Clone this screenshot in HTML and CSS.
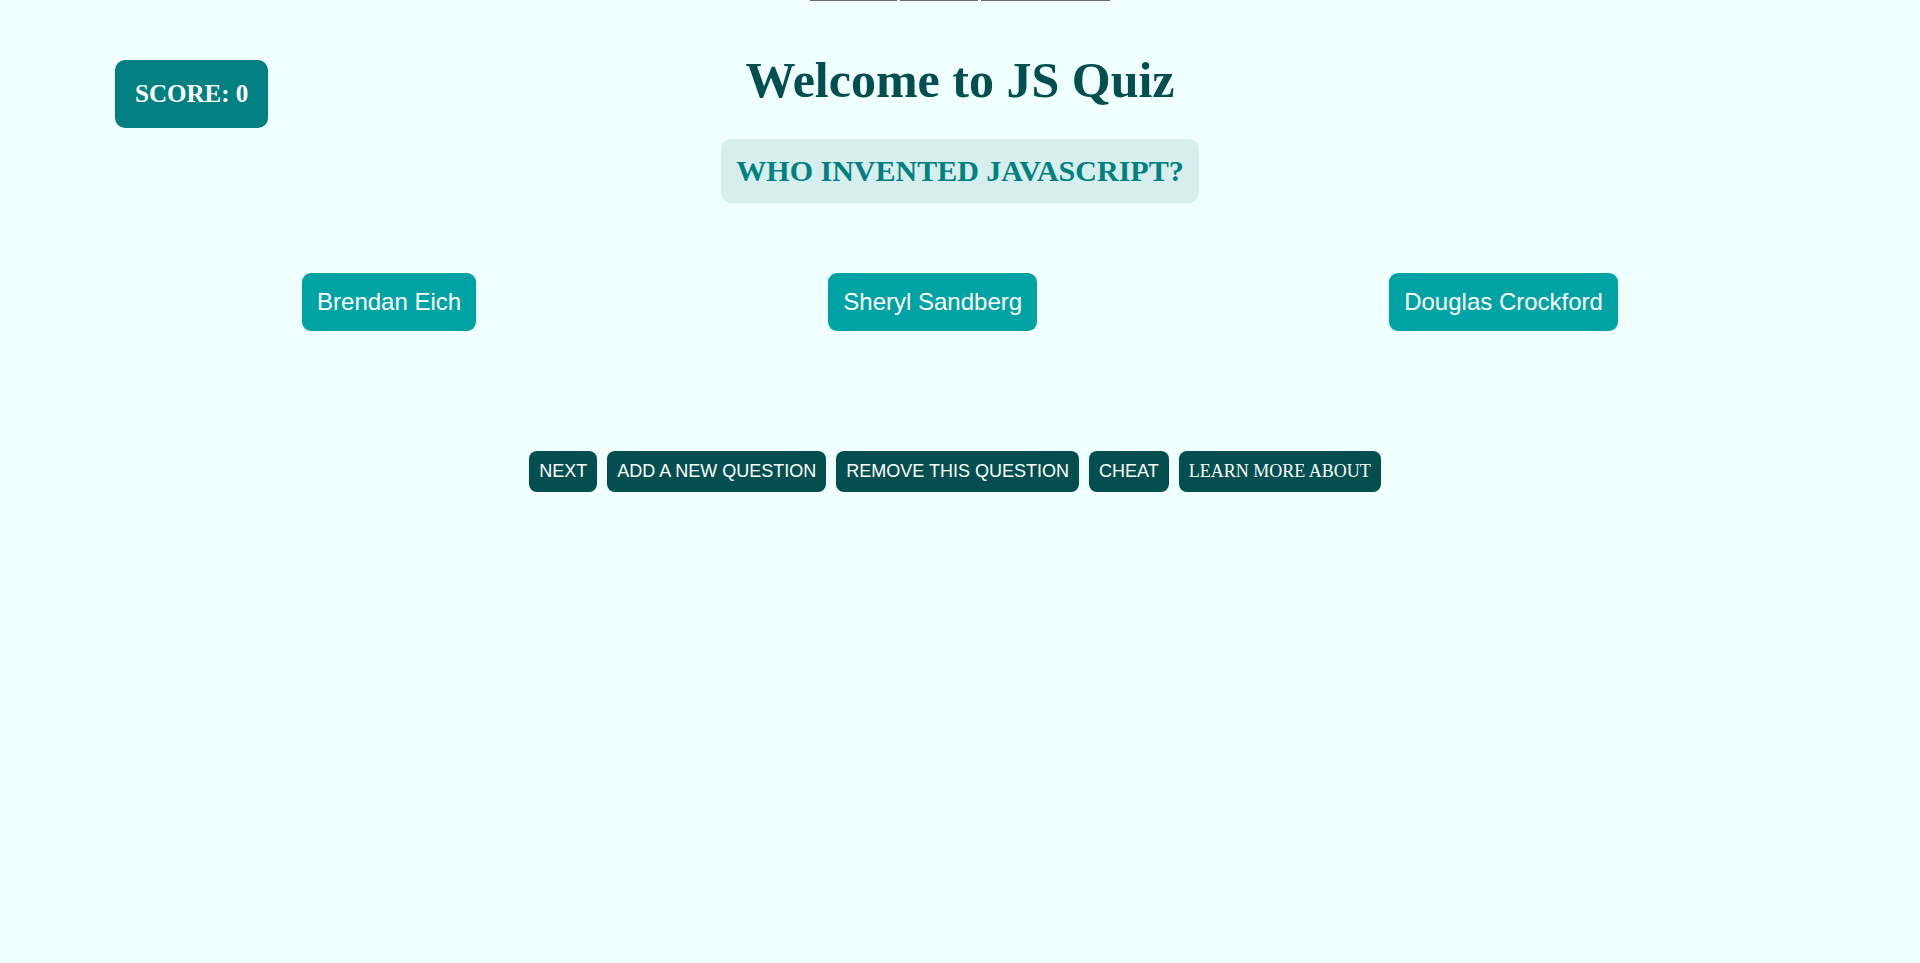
FILE: index.html
```html
<!DOCTYPE html>
<html lang="en">
<head>
<meta charset="utf-8">
<title>JS Quiz</title>
<link rel="stylesheet" href="styles.css">
</head>
<body>
<nav class="topbar">
  <span class="seg seg-1"></span>
  <span class="seg seg-2"></span>
  <span class="seg seg-3"></span>
</nav>
<header class="header">
  <div class="score-col"><div class="score">SCORE: 0</div></div>
  <h1 class="title">Welcome to JS Quiz</h1>
  <div></div>
</header>
<section class="question-wrap">
  <h2 class="question">WHO INVENTED JAVASCRIPT?</h2>
</section>
<section class="answers">
  <button class="answer">Brendan Eich</button>
  <button class="answer">Sheryl Sandberg</button>
  <button class="answer">Douglas Crockford</button>
</section>
<section class="controls">
  <button class="ctrl">NEXT</button>
  <button class="ctrl">ADD A NEW QUESTION</button>
  <button class="ctrl">REMOVE THIS QUESTION</button>
  <button class="ctrl">CHEAT</button>
  <a class="ctrl ctrl-link" href="#">LEARN MORE ABOUT</a>
</section>
</body>
</html>
```

FILE: styles.css
```css
html, body {
  margin: 0;
  padding: 0;
}
body {
  background: #f0ffff;
  font-family: "Liberation Serif", "Times New Roman", serif;
  min-height: 963px;
}
.topbar {
  display: flex;
  justify-content: center;
  gap: 3px;
  height: 1px;
}
.seg {
  display: block;
  height: 1px;
  background: #6b6b6b;
}
.seg-1 { width: 87px; }
.seg-2 { width: 78px; }
.seg-3 { width: 129px; }

.header {
  display: grid;
  grid-template-columns: 1fr auto 1fr;
  align-items: start;
  margin-top: 49px;
}
.score-col {
  padding-left: 115px;
  padding-top: 10px;
}
.score {
  display: inline-block;
  background: #008080;
  color: #ffffff;
  font-weight: bold;
  font-size: 25px;
  padding: 20px;
  border-radius: 10px;
}
.title {
  margin: 1px 0 0;
  font-size: 50px;
  font-weight: bold;
  color: #034f4f;
  text-align: center;
}
.question-wrap {
  display: flex;
  justify-content: center;
  margin-top: 11px;
}
.question {
  margin: 0;
  background: #d6eeed;
  color: #008080;
  font-size: 30px;
  font-weight: bold;
  padding: 15px;
  border-radius: 10px;
}
.answers {
  display: flex;
  justify-content: space-around;
  padding: 0 126px;
  margin-top: 70px;
}
.answer {
  font-family: "Liberation Sans", Arial, sans-serif;
  font-size: 24px;
  color: #ffffff;
  background: #00a3a3;
  border: none;
  padding: 15px;
  border-radius: 9px;
  line-height: normal;
}
.controls {
  display: flex;
  justify-content: center;
  margin-top: 120px;
}
.ctrl {
  font-family: "Liberation Sans", Arial, sans-serif;
  font-size: 18px;
  color: #ffffff;
  background: #034f4f;
  border: none;
  padding: 10px;
  border-radius: 8px;
  margin-right: 10px;
  line-height: normal;
  text-decoration: none;
}
.ctrl-link {
  font-family: "Liberation Serif", "Times New Roman", serif;
  display: inline-block;
}
```
